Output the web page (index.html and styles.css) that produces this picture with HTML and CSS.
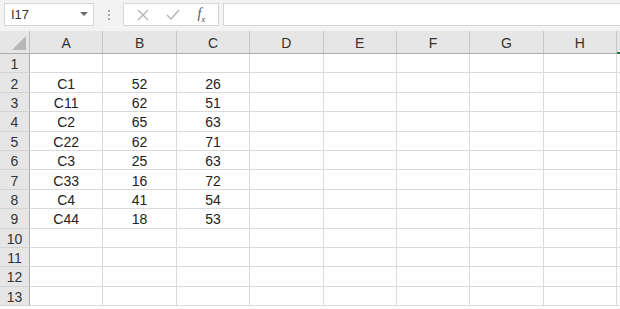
FILE: index.html
```html
<!DOCTYPE html>
<html lang="zh-CN">
<head>
    <meta charset="UTF-8">
    <title>Sheet1</title>
    <link rel="stylesheet" href="styles.css">
</head>
<body>
    <div class="toolbar">
        <div class="name-box">
            <span>I17</span>
            <svg class="caret" width="8" height="5" viewBox="0 0 8 5"><path d="M0 0 L8 0 L4 4 Z" fill="#6a6a6a"/></svg>
        </div>
        <div class="dots">
            <span></span><span></span><span></span>
        </div>
        <div class="fx-buttons">
            <svg width="12" height="12" viewBox="0 0 12 12"><path d="M1 1 L11 11 M11 1 L1 11" stroke="#b4b4b4" stroke-width="1.3" fill="none"/></svg>
            <svg width="14" height="12" viewBox="0 0 14 12"><path d="M1 6 L5 10 L13 1" stroke="#b4b4b4" stroke-width="1.4" fill="none"/></svg>
            <span class="fx">f<sub>x</sub></span>
        </div>
        <div class="formula-input"></div>
    </div>

    <div class="sheet" id="sheet"></div>

    <script>
        var dados = [
            ['C1', 52, 26],
            ['C11', 62, 51],
            ['C2', 65, 63],
            ['C22', 62, 71],
            ['C3', 25, 63],
            ['C33', 16, 72],
            ['C4', 41, 54],
            ['C44', 18, 53]
        ];
        var colunas = ['A', 'B', 'C', 'D', 'E', 'F', 'G', 'H', ''];

        function celula(classe, texto) {
            var div = document.createElement('div');
            div.className = classe;
            div.textContent = texto;
            return div;
        }

        function montarPlanilha() {
            var sheet = document.getElementById('sheet');

            var canto = celula('corner', '');
            canto.innerHTML = '<svg width="14" height="14" viewBox="0 0 14 14"><path d="M14 0 L14 14 L0 14 Z" fill="#b7b7b7"/></svg>';
            sheet.appendChild(canto);
            colunas.forEach(function(c, i) {
                var cab = celula('col-head', c);
                // coluna I (selecionada) tem a marca verde
                if (i == 8) cab.classList.add('selected');
                sheet.appendChild(cab);
            });

            for (var r = 1; r <= 13; r++) {
                sheet.appendChild(celula('row-head', r));
                var linha = dados[r - 2] || [];
                for (var c = 0; c < colunas.length; c++) {
                    var valor = linha[c] !== undefined ? linha[c] : '';
                    sheet.appendChild(celula('cell', valor));
                }
            }
        }

        montarPlanilha();
    </script>
</body>
</html>
```

FILE: styles.css
```css
body {
    margin: 0;
    padding: 0;
    width: 620px;
    height: 309px;
    overflow: hidden;
    background-color: #fff;
    font-family: "Liberation Sans", Arial, sans-serif;
    color: #222;
}

.toolbar {
    display: flex;
    align-items: center;
    height: 31px;
    padding: 0 0 2px 4px;
    box-sizing: border-box;
    background-color: #f3f3f3;
}

.name-box {
    display: flex;
    align-items: center;
    justify-content: space-between;
    width: 90px;
    height: 23px;
    padding: 0 5px 0 6px;
    box-sizing: border-box;
    background-color: #fff;
    border: 1px solid #d6d6d6;
    font-size: 13px;
    color: #333;
}

.dots {
    display: flex;
    flex-direction: column;
    gap: 2px;
    margin: 0 13px 0 14px;
}

.dots span {
    display: block;
    width: 2px;
    height: 2px;
    background-color: #a9a9a9;
}

.fx-buttons {
    display: flex;
    align-items: center;
    justify-content: space-around;
    width: 96px;
    height: 23px;
    box-sizing: border-box;
    padding: 0 4px;
    background-color: #fff;
    border: 1px solid #d6d6d6;
}

.fx {
    font-family: "Liberation Serif", serif;
    font-style: italic;
    font-size: 14px;
    color: #555;
}

.fx sub {
    font-size: 9px;
}

.formula-input {
    flex: 1;
    height: 23px;
    margin-left: 4px;
    box-sizing: border-box;
    background-color: #fff;
    border: 1px solid #d6d6d6;
    border-right: none;
}

.sheet {
    display: grid;
    grid-template-columns: 30px repeat(9, 73.4px);
    grid-template-rows: 23px;
    grid-auto-rows: 19.4px;
    width: 620px;
    overflow: hidden;
    font-size: 14px;
}

.corner,
.col-head,
.row-head {
    background-color: #e6e6e6;
    color: #333;
    box-sizing: border-box;
}

.corner {
    display: flex;
    align-items: flex-end;
    justify-content: flex-end;
    padding: 0 3px 3px 0;
    border-right: 1px solid #bdbdbd;
    border-bottom: 1px solid #ababab;
}

.col-head {
    display: flex;
    align-items: flex-end;
    justify-content: center;
    padding-bottom: 2px;
    border-right: 1px solid #c6c6c6;
    border-bottom: 1px solid #ababab;
}

.col-head.selected {
    border-bottom: 2px solid #217346;
}

.row-head {
    display: flex;
    align-items: center;
    justify-content: center;
    padding-top: 2px;
    border-right: 1px solid #ababab;
    border-bottom: 1px solid #d4d4d4;
}

.cell {
    display: flex;
    align-items: center;
    justify-content: center;
    padding-top: 2px;
    box-sizing: border-box;
    border-right: 1px solid #dadada;
    border-bottom: 1px solid #dadada;
}
```
